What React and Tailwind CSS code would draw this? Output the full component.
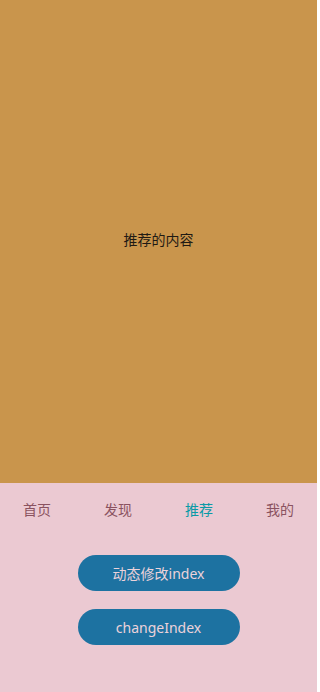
import React from "react";

const tabs = ["首页", "发现", "推荐", "我的"];

export default function App() {
    const current = 2;
    return (
        <div
            className="w-[317px] h-[692px] flex flex-col bg-[#ebc9d2]"
            style={{ fontFamily: '"Noto Sans", "Noto Sans CJK SC", sans-serif' }}
        >
            <div className="h-[483px] bg-[#c9954c] flex items-center justify-center">
                <span className="text-[14px] text-[#1f1a14] mt-[-5px]">推荐的内容</span>
            </div>
            <div className="h-[54px] flex items-center justify-between px-[23px]">
                {tabs.map((t, i) => (
                    <div
                        key={t}
                        className={
                            "text-center text-[14px] mt-[-2px] " +
                            (i === current ? "text-[#0a9aa6]" : "text-[#8a5260]")
                        }
                    >
                        {t}
                    </div>
                ))}
            </div>
            <div className="flex flex-col items-center gap-[18px] mt-[18px]">
                <button className="w-[162px] h-[36px] rounded-full bg-[#1d72a1] text-[#ecd2da] text-[14px]">
                    动态修改index
                </button>
                <button className="w-[162px] h-[36px] rounded-full bg-[#1d72a1] text-[#ecd2da] text-[14px]">
                    changeIndex
                </button>
            </div>
        </div>
    );
}
